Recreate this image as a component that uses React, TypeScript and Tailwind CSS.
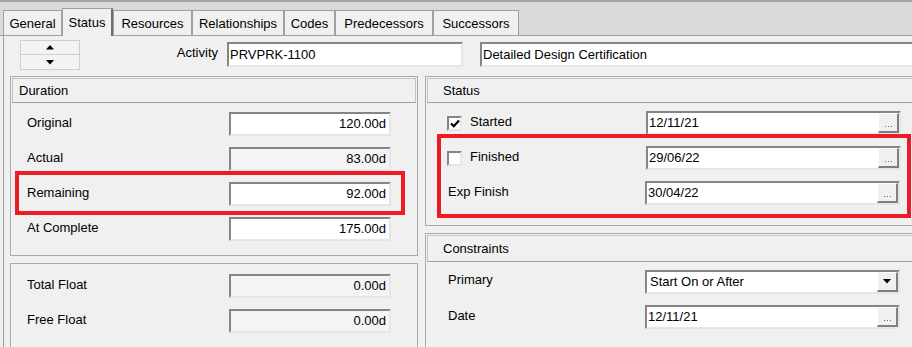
import React from "react";

const tabs = [
  { label: "General", w: "w-[59px]" },
  { label: "Status", w: "w-[51px]", active: true },
  { label: "Resources", w: "w-[79px]" },
  { label: "Relationships", w: "w-[92px]" },
  { label: "Codes", w: "w-[51px]" },
  { label: "Predecessors", w: "w-[98px]" },
  { label: "Successors", w: "w-[86px]" },
];

const sunken =
  "border-2 border-t-[#858585] border-l-[#858585] border-r-[#e6e6e6] border-b-[#e6e6e6]";

function Tab({ label, w, active }: { label: string; w: string; active?: boolean }) {
  if (active) {
    return (
      <div
        className={`${w} shrink-0 h-[28px] mb-[-1px] flex items-center justify-center bg-[#f0f0f0] border-t border-l border-[#a0a0a0] border-r-2 border-r-[#6e6e6e] pt-[1px]`}
      >
        {label}
      </div>
    );
  }
  return (
    <div
      className={`${w} shrink-0 h-[25px] flex items-center justify-center bg-[#f0f0f0] border-t border-l border-r border-[#a0a0a0] pt-[2px]`}
    >
      {label}
    </div>
  );
}

function NumField({ value, readOnly }: { value: string; readOnly?: boolean }) {
  return (
    <div
      className={`w-[162px] shrink-0 h-[24px] ${sunken} ${readOnly ? "bg-[#f4f4f4]" : "bg-white"} flex items-center justify-end pr-[3px]`}
    >
      {value}
    </div>
  );
}

function Dots() {
  return (
    <div className="flex gap-[2px] pb-[4px]">
      <span className="w-[1px] h-[1px] bg-[#7d4f9c]" />
      <span className="w-[1px] h-[1px] bg-[#7d4f9c]" />
      <span className="w-[1px] h-[1px] bg-[#7d4f9c]" />
    </div>
  );
}

function DateField({ value }: { value: string }) {
  return (
    <div className={`w-[255px] shrink-0 h-[24px] ${sunken} bg-white flex`}>
      <div className="flex-1 flex items-center pl-[1px]">{value}</div>
      <div className="w-[21px] h-full flex items-end justify-center bg-[#f0f0f0] border-t border-l border-r-2 border-b-2 border-t-white border-l-white border-r-[#7f7f7f] border-b-[#7f7f7f]">
        <Dots />
      </div>
    </div>
  );
}

function SelectField({ value }: { value: string }) {
  return (
    <div className={`w-[255px] shrink-0 h-[24px] ${sunken} bg-white flex`}>
      <div className="flex-1 flex items-center pl-[3px]">{value}</div>
      <div className="w-[21px] h-full flex items-center justify-center bg-[#f0f0f0] border-t border-l border-r-2 border-b-2 border-t-white border-l-white border-r-[#7f7f7f] border-b-[#7f7f7f]">
        <svg width="8" height="5" viewBox="0 0 8 5">
          <path d="M0 0 H8 L4 4.5 Z" fill="#000" />
        </svg>
      </div>
    </div>
  );
}

function Checkbox({ checked }: { checked?: boolean }) {
  return (
    <div className={`w-[15px] h-[15px] shrink-0 ${sunken} bg-white flex items-center justify-center`}>
      {checked && (
        <svg width="10" height="9" viewBox="0 0 10 9">
          <path d="M1 4.5 L3.8 7.2 L9 1.5" stroke="#000" strokeWidth="2.2" fill="none" />
        </svg>
      )}
    </div>
  );
}

function Panel({
  title,
  titlePad,
  headH,
  h,
  children,
}: {
  title?: string;
  titlePad?: string;
  headH?: string;
  h: string;
  children: React.ReactNode;
}) {
  return (
    <div className={`${h} shrink-0 border border-[#aaaaaa] bg-[#f0f0f0]`}>
      {title && (
        <div
          className={`m-px ${headH} border border-[#c4c4c4] border-b-[#a0a0a0] flex items-center ${titlePad}`}
        >
          {title}
        </div>
      )}
      {children}
    </div>
  );
}

function DurRow({ label, value, readOnly }: { label: string; value: string; readOnly?: boolean }) {
  return (
    <div className="flex items-center h-[24px] pl-[16px]">
      <div className="w-[202px] shrink-0 mt-[-2px]">{label}</div>
      <NumField value={value} readOnly={readOnly} />
    </div>
  );
}

export default function App() {
  return (
    <div className="w-[912px] h-[347px] overflow-hidden bg-[#f0f0f0] font-['Liberation_Sans',Arial,sans-serif] text-[13px] text-black">
      <div className="h-[2px] bg-[#a3a3a3]" />
      <div className="h-[34px] bg-[#d9d9d9] border-b border-[#a0a0a0] flex items-end pl-[3px]">
        {tabs.map((t) => (
          <Tab key={t.label} label={t.label} w={t.w} active={t.active} />
        ))}
      </div>

      <div className="ml-[3px] h-[311px] border-l border-[#a0a0a0] overflow-hidden">
        {/* activity row */}
        <div className="flex h-[40px] items-start">
          <div className="ml-[16px] mt-[4px] w-[60px] shrink-0 flex flex-col">
            <div className="h-[15px] border border-[#cfcfcf] bg-[#f3f3f3] flex items-center justify-center">
              <svg width="8" height="5" viewBox="0 0 8 5">
                <path d="M0 4.5 H8 L4 0 Z" fill="#000" />
              </svg>
            </div>
            <div className="h-[15px] border border-[#cfcfcf] border-t-0 bg-[#f3f3f3] flex items-center justify-center">
              <svg width="8" height="5" viewBox="0 0 8 5">
                <path d="M0 0 H8 L4 4.5 Z" fill="#000" />
              </svg>
            </div>
          </div>
          <div className="w-[138px] shrink-0 mt-[6px] h-[25px] flex items-center justify-end pb-[3px]">Activity</div>
          <div className={`ml-[9px] mt-[6px] w-[236px] shrink-0 h-[25px] ${sunken} bg-white flex items-center pl-[1px]`}>
            PRVPRK-1100
          </div>
          <div className={`ml-[17px] mt-[6px] w-[450px] shrink-0 h-[25px] ${sunken} bg-white flex items-center pl-[1px]`}>
            Detailed Design Certification
          </div>
        </div>

        {/* panels */}
        <div className="flex ml-[6px] gap-[7px]">
          <div className="w-[408px] shrink-0 flex flex-col gap-[7px]">
            <Panel title="Duration" titlePad="pl-[6px]" headH="h-[25px]" h="h-[180px]">
              <div className="pt-[8px] flex flex-col gap-[11px]">
                <DurRow label="Original" value="120.00d" />
                <DurRow label="Actual" value="83.00d" readOnly />
                <div className="relative">
                  <DurRow label="Remaining" value="92.00d" />
                  <div className="absolute left-[4px] top-[-11px] w-[390px] h-[44px] border-4 border-[#ec1c24]" />
                </div>
                <DurRow label="At Complete" value="175.00d" />
              </div>
            </Panel>
            <Panel h="h-[100px]">
              <div className="pt-[10px] flex flex-col gap-[11px]">
                <DurRow label="Total Float" value="0.00d" readOnly />
                <DurRow label="Free Float" value="0.00d" readOnly />
              </div>
            </Panel>
          </div>

          <div className="w-[495px] shrink-0 flex flex-col gap-[7px]">
            <Panel title="Status" titlePad="pl-[15px]" headH="h-[25px]" h="h-[150px]">
              <div className="pt-[7px] flex flex-col gap-[11px]">
                <div className="flex items-center h-[24px] pl-[21px]">
                  <Checkbox checked />
                  <div className="w-[184px] shrink-0 pl-[8px] mt-[-2px]">Started</div>
                  <DateField value="12/11/21" />
                </div>
                <div className="relative flex flex-col gap-[11px]">
                  <div className="flex items-center h-[24px] pl-[21px]">
                    <Checkbox />
                    <div className="w-[184px] shrink-0 pl-[8px] mt-[-2px]">Finished</div>
                    <DateField value="29/06/22" />
                  </div>
                  <div className="flex items-center h-[24px] pl-[22px]">
                    <div className="w-[197px] shrink-0 mt-[-2px]">Exp Finish</div>
                    <DateField value="30/04/22" />
                  </div>
                  <div className="absolute left-[11px] top-[-12px] w-[474px] h-[84px] border-4 border-[#ec1c24]" />
                </div>
              </div>
            </Panel>
            <Panel title="Constraints" titlePad="pl-[15px]" headH="h-[27px]" h="h-[130px]">
              <div className="pt-[7px] flex flex-col gap-[11px]">
                <div className="flex items-center h-[24px] pl-[22px]">
                  <div className="w-[197px] shrink-0 mt-[-4px]">Primary</div>
                  <SelectField value="Start On or After" />
                </div>
                <div className="flex items-center h-[24px] pl-[22px]">
                  <div className="w-[197px] shrink-0 mt-[-2px]">Date</div>
                  <DateField value="12/11/21" />
                </div>
              </div>
            </Panel>
          </div>
        </div>
      </div>
    </div>
  );
}
